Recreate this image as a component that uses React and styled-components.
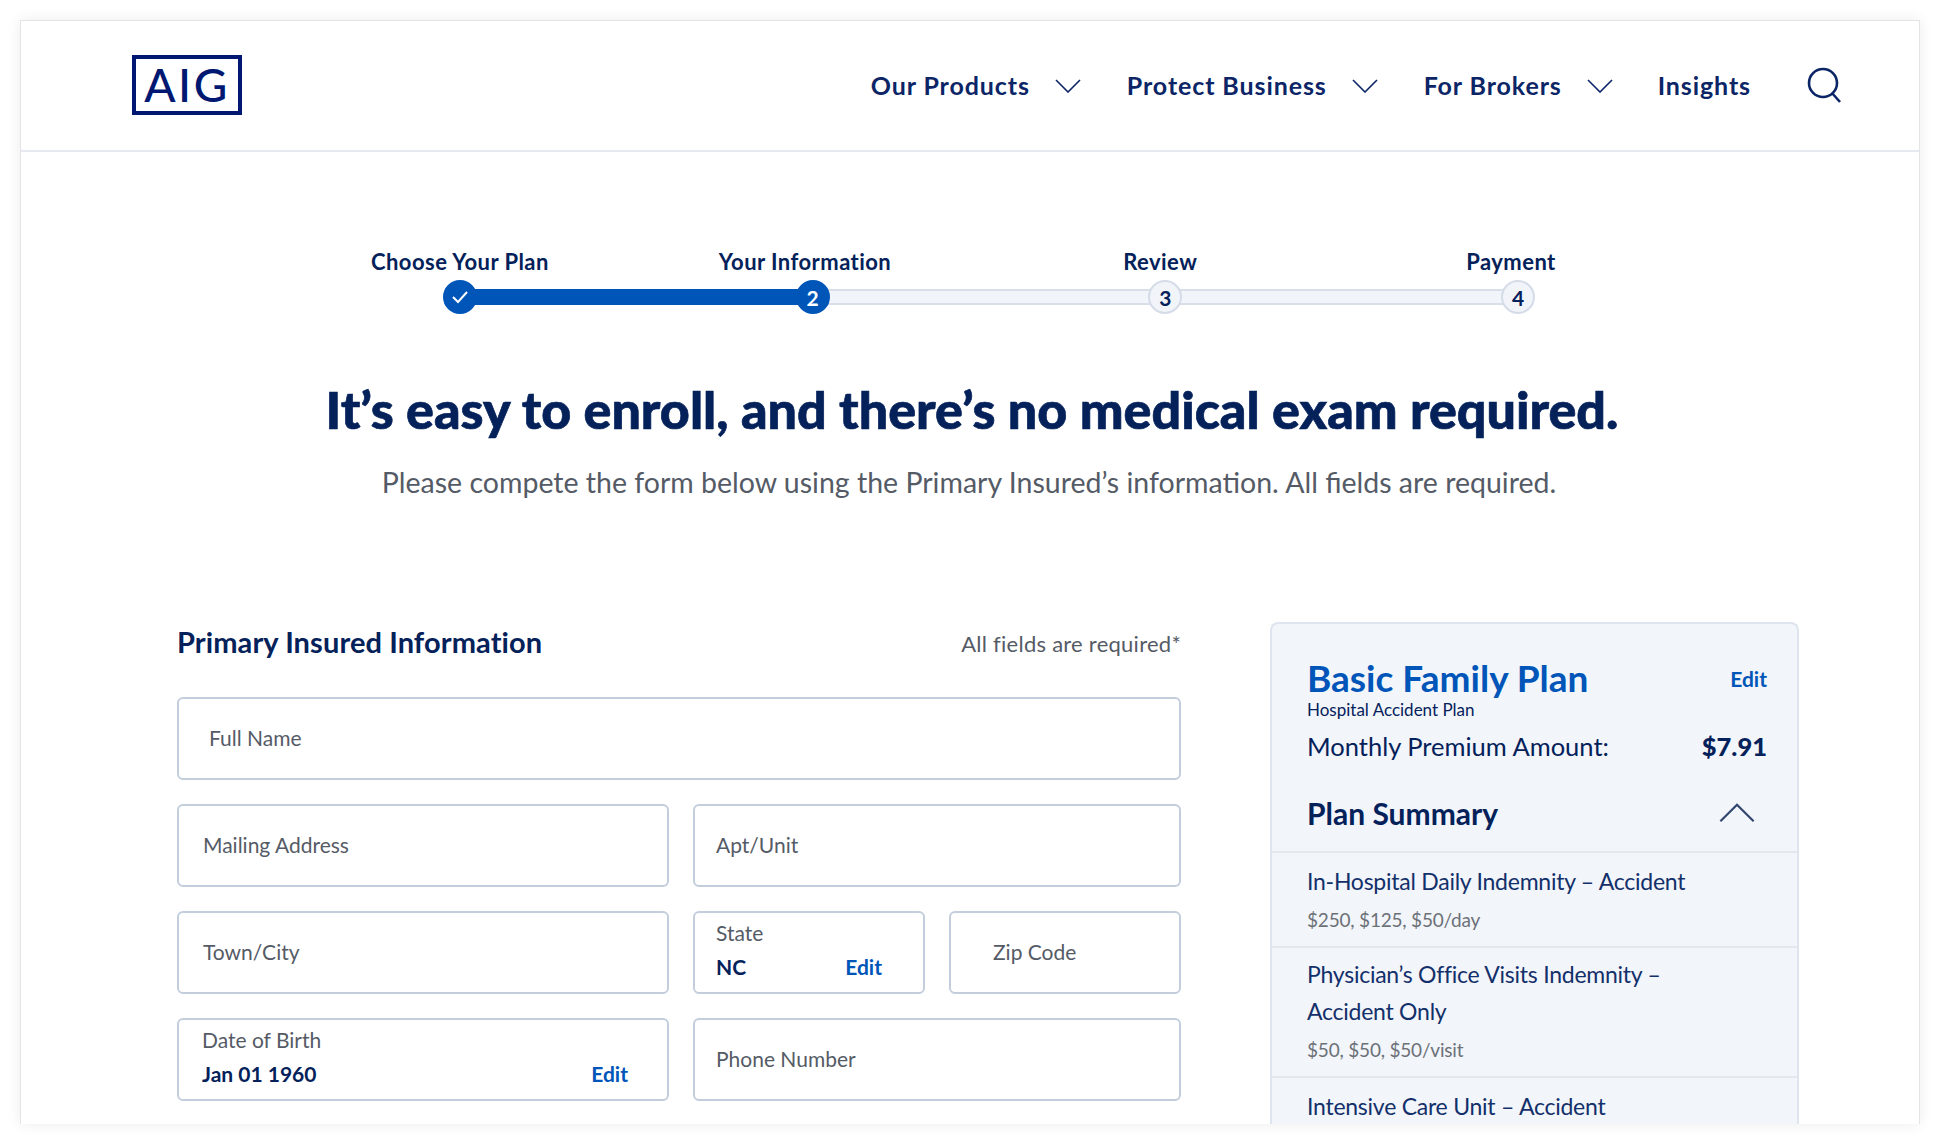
import styled, { createGlobalStyle } from 'styled-components';

const navy = '#04215a';
const blue = '#0055b8';
const fieldLine = '#c3cedd';

const GlobalStyle = createGlobalStyle`
  html, body {
    margin: 0;
    height: 1144px;
    overflow: hidden;
    background: #fff;
    font-family: 'Lato', 'Liberation Sans', sans-serif;
    color: ${navy};
  }
  * { box-sizing: border-box; }
`;

const Frame = styled.div`
  width: 1900px;
  height: 1104px;
  margin: 20px 20px 0;
  overflow: hidden;
  background: #fff;
  border: 1px solid #e4e4e6;
  border-bottom: none;
  box-shadow: 0 0 14px rgba(0, 0, 0, 0.08);
`;

const Header = styled.header`
  height: 131px;
  display: flex;
  align-items: center;
  padding: 0 76px 0 111px;
  border-bottom: 2px solid #e6e9f0;
`;

const Logo = styled.div`
  width: 110px;
  height: 60px;
  border: 4px solid #001871;
  display: flex;
  align-items: center;
  justify-content: center;
  font-size: 46px;
  font-weight: 500;
  letter-spacing: 2.5px;
  line-height: 1;
  color: #001871;
  margin-top: -1px;
`;

const Nav = styled.nav`
  margin-left: auto;
  display: flex;
  align-items: center;
`;

const NavLink = styled.span`
  font-size: 25px;
  font-weight: 700;
  letter-spacing: 0.9px;
  color: #0b2566;
  margin-top: -2px;
  margin-left: ${p => p.$gap}px;
`;

const NavCaret = styled.svg`
  width: 26px;
  height: 14px;
  margin-left: 25px;
  fill: none;
  stroke: #0b2566;
  stroke-width: 1.6;
`;

const SearchIcon = styled.svg`
  width: 36px;
  height: 36px;
  margin-left: 56px;
  margin-top: -1px;
  fill: none;
  stroke: #0b2566;
  stroke-width: 2.6;
`;

const Stepper = styled.section`
  width: 1092px;
  margin: 0 0 0 422px;
  padding-top: 95px;
`;

const StepLabels = styled.div`
  display: flex;
  margin-left: -72px;
  margin-bottom: 3px;
`;

const StepLabel = styled.span`
  font-size: 22px;
  font-weight: 700;
  letter-spacing: 0.45px;
  line-height: 30px;
  color: ${navy};
  margin-left: ${p => p.$gap}px;
  white-space: nowrap;
`;

const StepTrack = styled.div`
  display: flex;
  align-items: center;
`;

const StepDot = styled.div`
  width: 34px;
  height: 34px;
  flex: none;
  position: relative;
  z-index: 1;
  border-radius: 50%;
  display: flex;
  align-items: center;
  justify-content: center;
  font-size: 21px;
  font-weight: 700;
  color: ${p => (p.$done ? '#fff' : navy)};
  background: ${p => (p.$done ? blue : '#f1f4f9')};
  border: 2px solid ${p => (p.$done ? blue : '#d5dce8')};
`;

const StepBar = styled.div`
  height: 16px;
  flex: 1;
  margin: 0 -2px;
  background: ${p => (p.$done ? blue : '#f1f4f9')};
  border-top: 2px solid ${p => (p.$done ? blue : '#d9dfe9')};
  border-bottom: 2px solid ${p => (p.$done ? blue : '#d9dfe9')};
`;

const Intro = styled.div`
  text-align: center;
  margin-left: 4px;
`;

const Title = styled.h1`
  margin: 64px 0 0;
  font-size: 52px;
  line-height: 62px;
  font-weight: 900;
  -webkit-text-stroke: 0.7px ${navy};
  color: ${navy};
`;

const Lead = styled.p`
  margin: 24px 0 0 -6px;
  font-size: 28.5px;
  line-height: 36px;
  color: #555b66;
`;

const Content = styled.main`
  display: flex;
  align-items: flex-start;
  margin-top: 122px;
  padding-left: 156px;
`;

const FormColumn = styled.div`
  width: 1004px;
`;

const FormHead = styled.div`
  display: flex;
  justify-content: space-between;
  align-items: center;
  height: 40px;
  margin: -1px 0 36px;
`;

const FormTitle = styled.h2`
  margin: 0;
  font-size: 29px;
  font-weight: 700;
  letter-spacing: 0.1px;
  color: ${navy};
`;

const Required = styled.span`
  font-size: 22px;
  letter-spacing: 0.25px;
  padding-top: 4px;
  color: #555b66;
`;

const FormRows = styled.div`
  display: grid;
  gap: 24px;
`;

const Row = styled.div`
  display: grid;
  grid-template-columns: ${p => p.$cols || '1fr'};
  gap: 24px;
`;

const SplitCell = styled.div`
  display: grid;
  grid-template-columns: 1fr 1fr;
  gap: 24px;
`;

const Field = styled.div`
  height: 83px;
  border: 2px solid ${fieldLine};
  border-radius: 6px;
  background: #fff;
  padding: 0 ${p => p.$pad || 24}px ${p => p.$lift || 2}px;
  display: flex;
  flex-direction: column;
  justify-content: center;
`;

const Placeholder = styled.span`
  font-size: 21px;
  color: #555b66;
`;

const FieldLabel = styled.span`
  font-size: 21px;
  line-height: 28px;
  color: #555b66;
`;

const FieldValue = styled.div`
  display: flex;
  justify-content: space-between;
  align-items: center;
  margin-top: 6px;
  padding-right: ${p => p.$inset}px;
  font-size: 21px;
  line-height: 28px;
  font-weight: 700;
  color: ${navy};
`;

const EditLink = styled.span`
  font-size: 21px;
  font-weight: 700;
  color: ${blue};
`;

const Panel = styled.aside`
  width: 529px;
  height: 520px;
  margin-left: 89px;
  background: #f2f5fa;
  border: 2px solid #dfe5ee;
  border-bottom: none;
  border-radius: 8px 8px 0 0;
`;

const PanelTop = styled.div`
  padding: 30px 30px 0 35px;
`;

const PlanHead = styled.div`
  display: flex;
  justify-content: space-between;
  align-items: center;
`;

const PlanName = styled.h3`
  margin: 0;
  font-size: 37px;
  line-height: 48px;
  font-weight: 700;
  color: ${blue};
`;

const PlanKind = styled.div`
  font-size: 17px;
  line-height: 20px;
  margin-top: -2px;
  color: ${navy};
`;

const PremiumRow = styled.div`
  display: flex;
  justify-content: space-between;
  align-items: center;
  margin-top: 9px;
  font-size: 25.5px;
  line-height: 34px;
  color: ${navy};
`;

const Price = styled.strong`
  font-weight: 900;
`;

const SummaryHead = styled.div`
  display: flex;
  justify-content: space-between;
  align-items: center;
  height: 78px;
  margin-top: 12px;
  padding: 0 42px 0 35px;
  border-bottom: 2px solid #e3e7ee;
`;

const SummaryTitle = styled.h4`
  margin: 0;
  font-size: 30px;
  font-weight: 700;
  color: ${navy};
`;

const SummaryCaret = styled.svg`
  width: 36px;
  height: 20px;
  fill: none;
  stroke: #33466f;
  stroke-width: 1.6;
`;

const Benefit = styled.div`
  padding: ${p => p.$top}px 35px 7px;
  border-bottom: 2px solid #e3e7ee;
`;

const BenefitName = styled.div`
  font-size: 23px;
  letter-spacing: -0.25px;
  line-height: 37px;
  color: #13306a;
`;

const BenefitAmount = styled.div`
  margin-top: 1px;
  font-size: 19px;
  letter-spacing: -0.2px;
  line-height: 38px;
  color: #6c7178;
`;

const benefits = [
  { top: 10, name: <>In-Hospital Daily Indemnity – Accident</>, amount: '$250, $125, $50/day' },
  { top: 8, name: <>Physician’s Office Visits Indemnity –<br />Accident Only</>, amount: '$50, $50, $50/visit' },
  { top: 10, name: <>Intensive Care Unit – Accident</> },
];

const Caret = ({ as: Comp, up }) => (
  <Comp viewBox="0 0 26 14">
    <path d={up ? 'M1 13 L13 1 L25 13' : 'M1 1 L13 13 L25 1'} />
  </Comp>
);

export default function App() {
  return (
    <>
      <GlobalStyle />
      <Frame>
        <Header>
          <Logo>AIG</Logo>
          <Nav>
            <NavLink $gap={0}>Our Products</NavLink>
            <Caret as={NavCaret} />
            <NavLink $gap={46}>Protect Business</NavLink>
            <Caret as={NavCaret} />
            <NavLink $gap={46}>For Brokers</NavLink>
            <Caret as={NavCaret} />
            <NavLink $gap={45}>Insights</NavLink>
            <SearchIcon viewBox="0 0 36 36">
              <circle cx="16" cy="16" r="14" />
              <path d="M25 26 L33 35" />
            </SearchIcon>
          </Nav>
        </Header>

        <Stepper>
          <StepLabels>
            <StepLabel $gap={0}>Choose Your Plan</StepLabel>
            <StepLabel $gap={170}>Your Information</StepLabel>
            <StepLabel $gap={232}>Review</StepLabel>
            <StepLabel $gap={269}>Payment</StepLabel>
          </StepLabels>
          <StepTrack>
            <StepDot $done>
              <svg width="18" height="14" viewBox="0 0 18 14" fill="none" stroke="#fff" strokeWidth="2">
                <path d="M2 7 L7 12 L16 2" />
              </svg>
            </StepDot>
            <StepBar $done />
            <StepDot $done>2</StepDot>
            <StepBar />
            <StepDot>3</StepDot>
            <StepBar />
            <StepDot>4</StepDot>
          </StepTrack>
        </Stepper>

        <Intro>
          <Title>It’s easy to enroll, and there’s no medical exam required.</Title>
          <Lead>Please compete the form below using the Primary Insured’s information. All fields are required.</Lead>
        </Intro>

        <Content>
          <FormColumn>
            <FormHead>
              <FormTitle>Primary Insured Information</FormTitle>
              <Required>All fields are required*</Required>
            </FormHead>
            <FormRows>
              <Row>
                <Field $pad={30}><Placeholder>Full Name</Placeholder></Field>
              </Row>
              <Row $cols="492px 488px">
                <Field><Placeholder>Mailing Address</Placeholder></Field>
                <Field $pad={21}><Placeholder>Apt/Unit</Placeholder></Field>
              </Row>
              <Row $cols="492px 488px">
                <Field><Placeholder>Town/City</Placeholder></Field>
                <SplitCell>
                  <Field $pad={21} $lift={6}>
                    <FieldLabel>State</FieldLabel>
                    <FieldValue $inset={20}>NC<EditLink>Edit</EditLink></FieldValue>
                  </Field>
                  <Field $pad={42}><Placeholder>Zip Code</Placeholder></Field>
                </SplitCell>
              </Row>
              <Row $cols="492px 488px">
                <Field $pad={23} $lift={6}>
                  <FieldLabel>Date of Birth</FieldLabel>
                  <FieldValue $inset={16}>Jan 01 1960<EditLink>Edit</EditLink></FieldValue>
                </Field>
                <Field $pad={21}><Placeholder>Phone Number</Placeholder></Field>
              </Row>
            </FormRows>
          </FormColumn>

          <Panel>
            <PanelTop>
              <PlanHead>
                <PlanName>Basic Family Plan</PlanName>
                <EditLink>Edit</EditLink>
              </PlanHead>
              <PlanKind>Hospital Accident Plan</PlanKind>
              <PremiumRow>
                Monthly Premium Amount:
                <Price>$7.91</Price>
              </PremiumRow>
            </PanelTop>
            <SummaryHead>
              <SummaryTitle>Plan Summary</SummaryTitle>
              <Caret as={SummaryCaret} up />
            </SummaryHead>
            {benefits.map((b, i) => (
              <Benefit key={i} $top={b.top}>
                <BenefitName>{b.name}</BenefitName>
                {b.amount && <BenefitAmount>{b.amount}</BenefitAmount>}
              </Benefit>
            ))}
          </Panel>
        </Content>
      </Frame>
    </>
  );
}
